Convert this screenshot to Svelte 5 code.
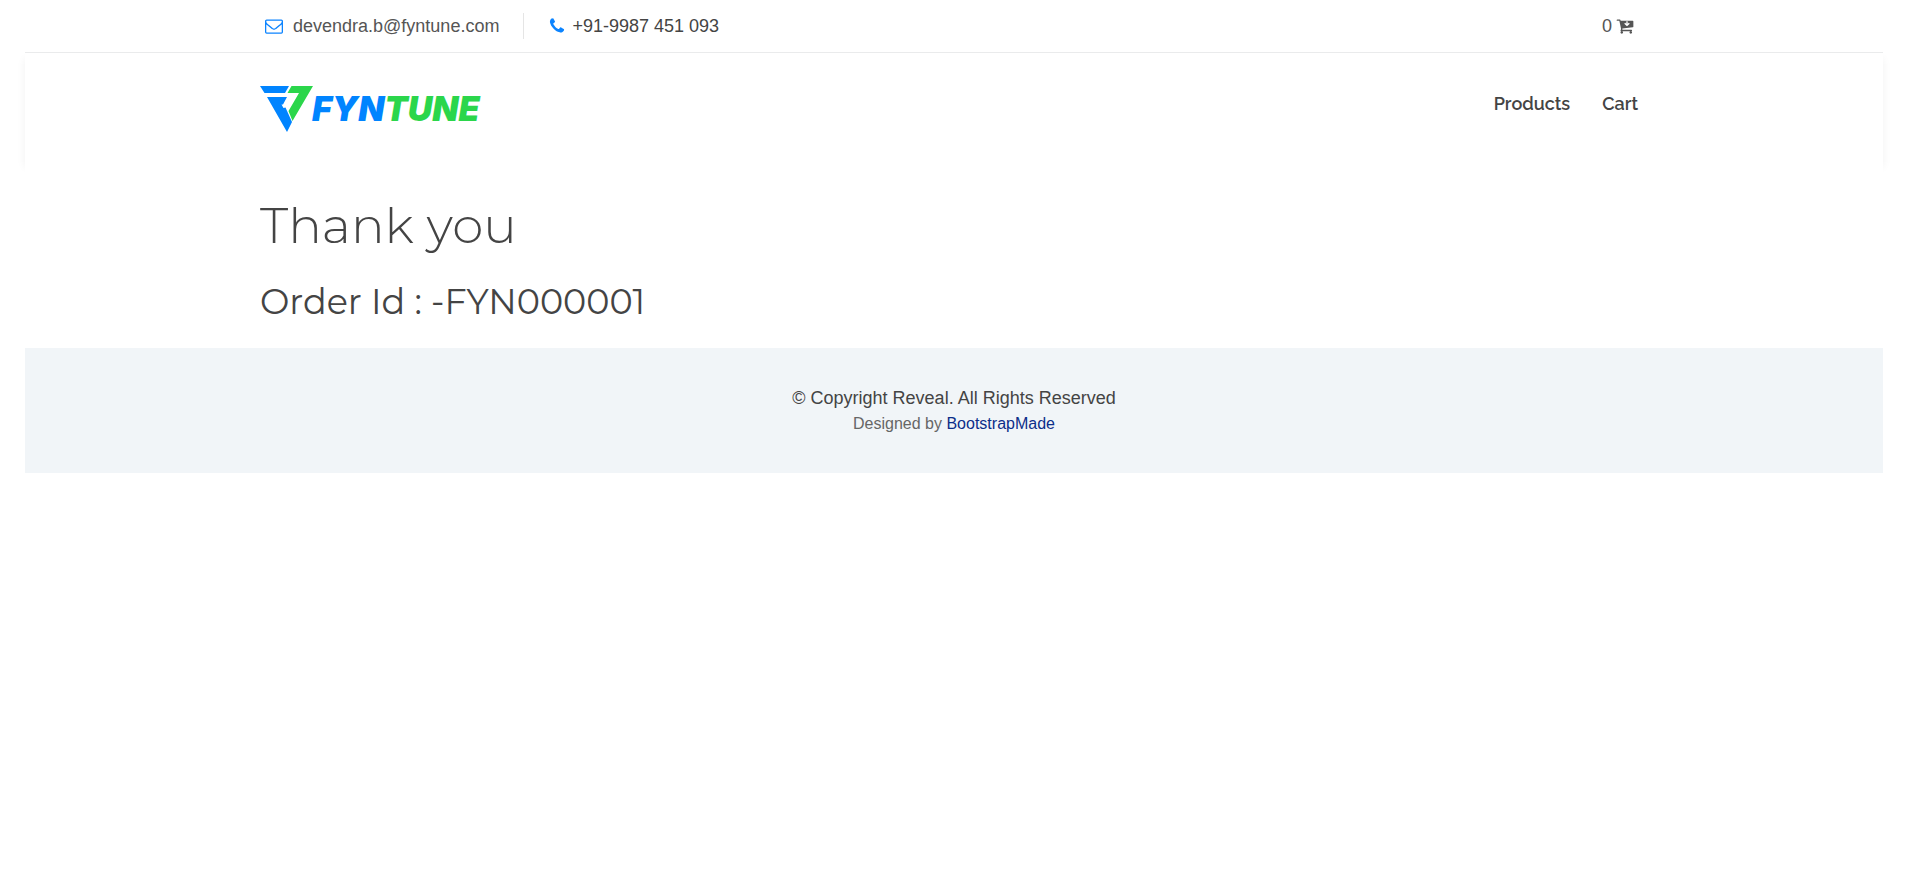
<script>
  const nav = ['Products', 'Cart'];
  const cartCount = 0;
  const orderId = '-FYN000001';
</script>

<div class="page">
  <section class="topbar">
    <div class="container bar">
      <div class="contact">
        <a class="mail" href="mailto:devendra.b@fyntune.com">
          <svg class="icon blue" viewBox="0 0 1792 1792" aria-hidden="true"><path d="M1664 1504v-768q-32 36-69 66-268 206-426 338-51 43-83 67t-86.5 48.5-102.5 24.5h-2q-48 0-102.5-24.5t-86.5-48.5-83-67q-158-132-426-338-37-30-69-66v768q0 13 9.5 22.5t22.5 9.5h1472q13 0 22.5-9.5t9.5-22.5zm0-1051v-24.5l-.5-13-3-12.5-5.5-9-9-7.500-14-2.500h-1472q-13 0-22.500 9.500t-9.500 22.500q0 168 147 284 193 152 401 317 6 5 35 29.500t46 37.500 44.500 31.500 50.500 27.500 43 9h2q20 0 43-9t50.500-27.500 44.500-31.500 46-37.500 35-29.500q208-165 401-317 54-43 100.500-115.500t46.500-131.500zm128-37v1088q0 66-47 113t-113 47h-1472q-66 0-113-47t-47-113v-1088q0-66 47-113t113-47h1472q66 0 113 47t47 113z" /></svg>
          <span>devendra.b@fyntune.com</span>
        </a>
        <span class="phone">
          <svg class="icon blue" viewBox="0 0 1792 1792" aria-hidden="true"><path d="M1600 1240q0 27-10 70.5t-21 68.5q-21 50-122 106-94 51-186 51-27 0-53-3.5t-57.5-12.5-47-14.5-55.5-20.5-49-18q-98-35-175-83-127-79-264-216t-216-264q-48-77-83-175-3-9-18-49t-20.5-55.5-14.5-47-12.5-57.5-3.5-53q0-92 51-186 56-101 106-122 25-11 68.5-21t70.5-10q14 0 21 3 18 6 53 76 11 19 30 54t35 63.5 31 53.5q3 4 17.5 25t21.5 35.5 7 28.5q0 20-28.5 50t-62 55-62 53-28.5 46q0 9 5 22.5t8.5 20.5 14 24 11.5 19q76 137 174 235t235 174q2 1 19 11.5t24 14 20.5 8.5 22.5 5q18 0 46-28.5t53-62 55-62 50-28.5q14 0 28.5 7t35.5 21.5 25 17.5q25 15 53.5 31t63.5 35 54 30q70 35 76 53 3 7 3 21z" /></svg>
          <span>+91-9987 451 093</span>
        </span>
      </div>
      <a class="count" href="#cart">
        <span>{cartCount}</span>
        <svg class="icon" viewBox="0 0 1792 1792" aria-hidden="true"><path fill-rule="evenodd" d="M704 1536q0 52-38 90t-90 38-90-38-38-90 38-90 90-38 90 38 38 90zm896 0q0 52-38 90t-90 38-90-38-38-90 38-90 90-38 90 38 38 90zm128-1088v512q0 24-16.5 42.5t-40.5 21.5l-1044 122q13 60 13 70 0 16-24 64h920q26 0 45 19t19 45-19 45-45 19h-1024q-26 0-45-19t-19-45q0-11 8-31.5t16-36 21.5-40 15.5-29.5l-177-823h-204q-26 0-45-19t-19-45 19-45 45-19h256q16 0 28.5 6.5t19.5 15.5 13 24.5 8 26 5.5 29.5 4.5 26h1201q26 0 45 19t19 45zM1030 430v250l-120-100-90 90 275 255 275-255-90-90-120 100v-250z" /></svg>
      </a>
    </div>
  </section>

  <header>
    <div class="container head">
      <a class="logo" href="#home" aria-label="Fyntune">
        <svg class="mark" viewBox="0 0 54 46" aria-hidden="true">
          <path class="b" d="M0 0H29L25 7H4.500Z" />
          <path class="b" d="M7 11H27L23 18.500H21.500L23.500 22L25.500 21.500L32 36L27 46Z" />
          <path class="g" d="M31.500 0H53L32.500 35L28.500 25L39 7H27.500Z" />
        </svg>
        <span class="word"><span class="fyn">FYN</span><span class="tune">TUNE</span></span>
      </a>
      <nav>
        {#each nav as item}
          <a href="#{item.toLowerCase()}">{item}</a>
        {/each}
      </nav>
    </div>
  </header>

  <main>
    <div class="container">
      <h1>Thank you</h1>
      <h2>Order Id : {orderId}</h2>
    </div>
  </main>

  <footer>
    <p>© Copyright Reveal. All Rights Reserved</p>
    <p class="credits">Designed by <a href="#bootstrapmade">BootstrapMade</a></p>
  </footer>
</div>

<style>
  :global(body) {
    background: #fff;
  }
  .page {
    padding: 0 37px 0 25px;
    font: 18px/26px "Liberation Sans", Arial, sans-serif;
    color: #444;
  }
  a {
    color: inherit;
    text-decoration: none;
  }
  .container {
    max-width: 1388px;
    margin: 0 auto;
  }
  .topbar {
    position: relative;
    background: #fff;
    border-bottom: 1px solid #eaebec;
  }
  .bar,
  .head,
  .contact,
  .mail,
  .phone,
  .count,
  nav {
    display: flex;
    align-items: center;
  }
  .bar {
    justify-content: space-between;
    padding: 13px 0;
    box-sizing: border-box;
  }
  .mail {
    gap: 10px;
    padding: 0 24px 0 5px;
    color: #555;
  }
  .phone {
    gap: 6px;
    padding-left: 24px;
    border-left: 1px solid #e5e5e5;
  }
  .count {
    gap: 4px;
    padding-right: 14px;
    color: #555;
  }
  .icon {
    width: 18px;
    height: 18px;
    fill: currentColor;
  }
  .blue {
    color: #0c84ff;
  }
  header {
    background: #fff;
    box-shadow: 0 6px 9px rgba(0, 0, 0, 0.06);
  }
  .head {
    justify-content: space-between;
    align-items: flex-start;
    padding: 32px 0 28px;
  }
  .logo {
    display: flex;
    height: 48px;
  }
  .mark {
    width: 54px;
    height: 46px;
    margin-top: 1px;
  }
  .b {
    fill: #0084ff;
  }
  .g {
    fill: #2bd64b;
  }
  .word {
    font: italic 900 34px/48px Inter, sans-serif;
    margin-left: -2px;
  }
  .fyn {
    color: #0084ff;
  }
  .tune {
    color: #2bd64b;
  }
  nav {
    gap: 32px;
    padding: 6px 10px 0 0;
    font: 600 18px/26px Raleway, Lato, sans-serif;
    color: #444;
  }
  main {
    position: relative;
    padding: 35px 0 24px;
    background: #fff;
  }
  h1,
  h2 {
    margin: 0;
    font-family: Montserrat, Inter, sans-serif;
  }
  h1 {
    font-size: 50px;
    font-weight: 300;
    line-height: 60px;
  }
  h2 {
    margin-top: 24px;
    font-size: 35px;
    font-weight: 400;
    line-height: 44px;
  }
  footer {
    padding: 38px 0 37px;
    background: #f1f5f8;
    text-align: center;
  }
  p {
    margin: 0;
    line-height: 25px;
  }
  .credits {
    font-size: 16px;
    color: #666;
  }
  .credits a {
    color: #0c2e8a;
  }
</style>
